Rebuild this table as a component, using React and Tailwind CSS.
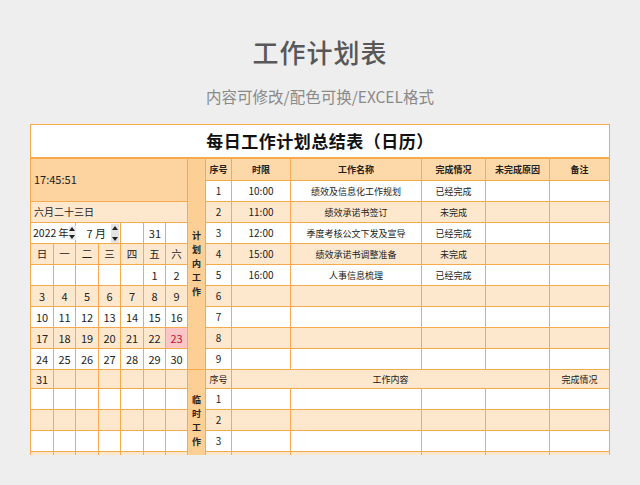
import React from "react";

const plan = [
  { n: 1, t: "10:00", name: "绩效及信息化工作规划", s: "已经完成" },
  { n: 2, t: "11:00", name: "绩效承诺书签订", s: "未完成" },
  { n: 3, t: "12:00", name: "季度考核公文下发及宣导", s: "已经完成" },
  { n: 4, t: "15:00", name: "绩效承诺书调整准备", s: "未完成" },
  { n: 5, t: "16:00", name: "人事信息梳理", s: "已经完成" },
  { n: 6 },
  { n: 7 },
  { n: 8 },
  { n: 9 },
];

// calendar rows shown beside plan rows 4..9
const calendar = [
  ["日", "一", "二", "三", "四", "五", "六"],
  ["", "", "", "", "", "1", "2"],
  ["3", "4", "5", "6", "7", "8", "9"],
  ["10", "11", "12", "13", "14", "15", "16"],
  ["17", "18", "19", "20", "21", "22", "23"],
  ["24", "25", "26", "27", "28", "29", "30"],
];

const cell = "border border-[#f7a94d] p-0 text-center align-middle";

function Spinner({ tall }) {
  return (
    <span
      className={
        tall
          ? "flex h-[19px] w-[8px] shrink-0 flex-col items-center justify-between bg-[#e4e4e4] py-[2px]"
          : "flex h-[14px] w-[7px] shrink-0 flex-col items-center justify-between bg-[#ececec] py-[1px]"
      }
    >
      <svg width="6" height="4" viewBox="0 0 6 4">
        <path d="M3 0 L6 4 L0 4 Z" fill="#222" />
      </svg>
      <svg width="6" height="4" viewBox="0 0 6 4">
        <path d="M0 0 L6 0 L3 4 Z" fill="#222" />
      </svg>
    </span>
  );
}

function VLabel({ text }) {
  return (
    <div className="flex flex-col items-center gap-0 text-[9px] font-bold leading-[14px] text-[#222]">
      {text.split("").map((c, i) => (
        <span key={i}>{c}</span>
      ))}
    </div>
  );
}

function PlanCells({ row }) {
  return (
    <>
      <td className={`${cell} text-[10px]`}>{row.n}</td>
      <td className={`${cell} text-[10px]`}>{row.t}</td>
      <td className={`${cell} text-[9px]`}>{row.name}</td>
      <td className={`${cell} text-[9px]`}>{row.s}</td>
      <td className={cell}></td>
      <td className={cell}></td>
    </>
  );
}

function CalCells({ days, head }) {
  return days.map((d, i) => (
    <td
      key={i}
      className={
        d === "23"
          ? `${cell} bg-[#fbc6c8] text-[11px] text-[#c8102e]`
          : `${cell} ${head ? "text-[10.5px]" : "text-[11px]"}`
      }
    >
      {d}
    </td>
  ));
}

export default function App() {
  const rowBg = (i) => (i % 2 === 0 ? "bg-white" : "bg-[#fde8cd]");

  return (
    <div
      className="h-[485px] w-[640px] overflow-hidden bg-[#eeeeee] text-[#222]"
      style={{ fontFamily: '"Noto Sans CJK SC", "Noto Sans", sans-serif' }}
    >
      <div className="pt-[34px] text-center text-[26px] font-medium leading-[36px] tracking-[1px] text-[#585858]">
        工作计划表
      </div>
      <div className="mt-[15px] text-center text-[15.5px] leading-[22px] text-[#8a8a8a]">
        内容可修改/配色可换/EXCEL格式
      </div>

      <div className="ml-[30px] mt-[17px] h-[331px] w-[580px] overflow-hidden">
        <table className="w-[579px] table-fixed border-collapse border border-[#f7a94d] leading-none">
          <colgroup>
            <col className="w-[23px]" />
            <col className="w-[22px]" />
            <col className="w-[23px]" />
            <col className="w-[22px]" />
            <col className="w-[23px]" />
            <col className="w-[22px]" />
            <col className="w-[22px]" />
            <col className="w-[18px]" />
            <col className="w-[26px]" />
            <col className="w-[59px]" />
            <col className="w-[131px]" />
            <col className="w-[64px]" />
            <col className="w-[64px]" />
            <col className="w-[60px]" />
          </colgroup>
          <tbody>
            <tr className="h-[33px] bg-white">
              <td
                colSpan={14}
                className="border border-b-2 border-[#f7a94d] p-0 text-center text-[17px] font-bold tracking-[0.5px] text-[#111]"
              >
                每日工作计划总结表（日历）
              </td>
            </tr>

            <tr className="h-[23px] bg-[#fdd8a8]">
              <td colSpan={7} rowSpan={2} className={`${cell} bg-[#fdd3a0] pl-[3px] text-left text-[11px]`}>
                17:45:51
              </td>
              <td rowSpan={10} className={`${cell} bg-[#fccf95]`}>
                <VLabel text="计划内工作" />
              </td>
              <td className={`${cell} text-[9px] font-bold`}>序号</td>
              <td className={`${cell} text-[9px] font-bold`}>时限</td>
              <td className={`${cell} text-[9px] font-bold`}>工作名称</td>
              <td className={`${cell} text-[9px] font-bold`}>完成情况</td>
              <td className={`${cell} text-[9px] font-bold`}>未完成原因</td>
              <td className={`${cell} text-[9px] font-bold`}>备注</td>
            </tr>

            <tr className={`h-[21px] ${rowBg(0)}`}>
              <PlanCells row={plan[0]} />
            </tr>

            <tr className={`h-[21px] ${rowBg(1)}`}>
              <td colSpan={7} className={`${cell} pl-[3px] text-left text-[10px]`}>
                六月二十三日
              </td>
              <PlanCells row={plan[1]} />
            </tr>

            <tr className={`h-[21px] ${rowBg(2)}`}>
              <td colSpan={2} className={cell}>
                <div className="flex items-center justify-between whitespace-nowrap pl-[2px] pr-[1px] text-[10.5px]">
                  <span>
                    2022<span className="ml-[2px]">年</span>
                  </span>
                  <Spinner />
                </div>
              </td>
              <td colSpan={2} className={cell}>
                <div className="flex items-center justify-end gap-[5px] whitespace-nowrap pr-[1px] text-[11px]">
                  <span>7 月</span>
                  <Spinner tall />
                </div>
              </td>
              <td className={cell}></td>
              <td className={`${cell} pr-[4px] text-right text-[11px]`}>31</td>
              <td className={cell}></td>
              <PlanCells row={plan[2]} />
            </tr>

            {calendar.map((days, i) => (
              <tr key={i} className={`h-[21px] ${rowBg(i + 3)}`}>
                <CalCells days={days} head={i === 0} />
                <PlanCells row={plan[i + 3]} />
              </tr>
            ))}

            <tr className="h-[19px] bg-[#fde8cd]">
              <CalCells days={["31", "", "", "", "", "", ""]} />
              <td rowSpan={5} className={`${cell} bg-[#fccf95]`}>
                <VLabel text="临时工作" />
              </td>
              <td className={`${cell} text-[9px]`}>序号</td>
              <td colSpan={4} className={`${cell} text-[9px]`}>工作内容</td>
              <td className={`${cell} text-[9px]`}>完成情况</td>
            </tr>

            {[1, 2, 3, 4].map((n) => (
              <tr key={n} className={`h-[21px] ${n % 2 === 1 ? "bg-white" : "bg-[#fde8cd]"}`}>
                <CalCells days={["", "", "", "", "", "", ""]} />
                <td className={`${cell} text-[10px]`}>{n < 4 ? n : ""}</td>
                <td className={cell}></td>
                <td className={cell}></td>
                <td className={cell}></td>
                <td className={cell}></td>
                <td className={cell}></td>
              </tr>
            ))}
          </tbody>
        </table>
      </div>
    </div>
  );
}
